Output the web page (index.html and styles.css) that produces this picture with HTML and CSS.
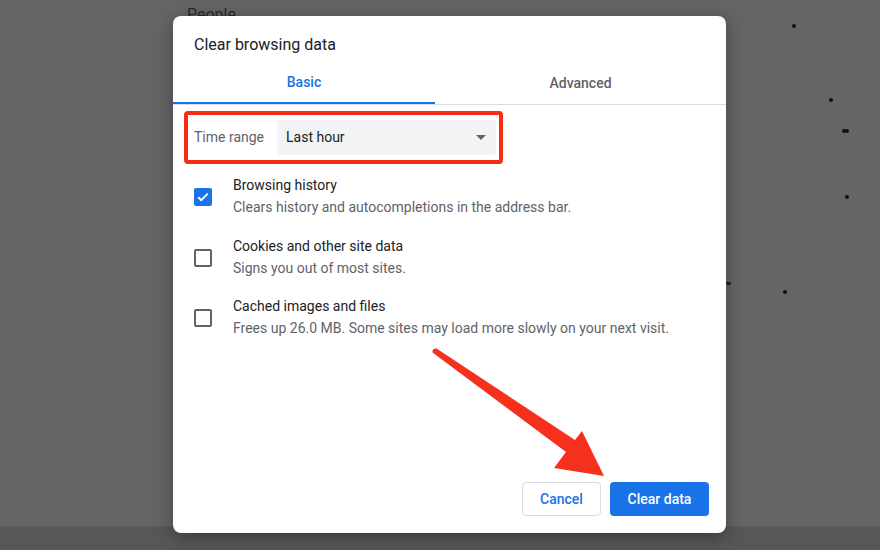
FILE: index.html
```html
<!DOCTYPE html>
<html>
<head>
<meta charset="utf-8">
<link rel="stylesheet" href="styles.css">
</head>
<body>
<div class="page">
  <div class="page-head">People</div>
  <div class="page-body"></div>
  <div class="page-foot"></div>
  <span class="dot" style="left:792px;top:24px"></span>
  <span class="dot" style="left:829px;top:98px"></span>
  <span class="dot" style="left:842px;top:129px"></span>
  <span class="dot" style="left:845px;top:129px"></span>
  <span class="dot" style="left:845px;top:195px"></span>
  <span class="dot" style="left:783px;top:290px"></span>
  <span class="dot tri" style="left:726px;top:282px"></span>
</div>

<div class="dialog">
  <div class="title">Clear browsing data</div>
  <div class="tabs">
    <div class="tab active">Basic</div>
    <div class="tab">Advanced</div>
  </div>
  <div class="content">
    <div class="range">
      <span class="range-label">Time range</span>
      <div class="select">
        <span>Last hour</span>
        <svg class="caret" width="10" height="5" viewBox="0 0 10 5"><path d="M0 0h10L5 5z" fill="#5f6368"/></svg>
      </div>
    </div>
    <div class="item">
      <span class="cb checked"><svg width="18" height="18" viewBox="0 0 18 18"><path d="M4.2 9.2l3 3 6.6-6.6" fill="none" stroke="#fff" stroke-width="2"/></svg></span>
      <div class="item-text">
        <div class="item-title">Browsing history</div>
        <div class="item-sub">Clears history and autocompletions in the address bar.</div>
      </div>
    </div>
    <div class="item">
      <span class="cb"></span>
      <div class="item-text">
        <div class="item-title">Cookies and other site data</div>
        <div class="item-sub">Signs you out of most sites.</div>
      </div>
    </div>
    <div class="item">
      <span class="cb"></span>
      <div class="item-text">
        <div class="item-title">Cached images and files</div>
        <div class="item-sub">Frees up 26.0 MB. Some sites may load more slowly on your next visit.</div>
      </div>
    </div>
  </div>
  <div class="actions">
    <button class="btn cancel">Cancel</button>
    <button class="btn primary">Clear data</button>
  </div>
</div>

<svg class="arrow" width="880" height="550" viewBox="0 0 880 550">
  <path d="M432.5 352.5 Q432 348 436.5 348.5 L575 440 L582 431 L604 476 L554 468 L566 452 Z" fill="#f5301c"/>
</svg>
</body>
</html>
```

FILE: styles.css
```css
* { box-sizing: border-box; }
html, body { margin: 0; padding: 0; }
body {
  width: 880px;
  height: 550px;
  overflow: hidden;
  background: #656565;
  font-family: Roboto, "Liberation Sans", Arial, sans-serif;
  position: relative;
}
.page {
  position: relative;
  width: 880px;
  height: 550px;
  display: flex;
  flex-direction: column;
}
.page-head {
  padding: 5px 0 0 187px;
  height: 24px;
  font-size: 16px;
  color: #2a2a2a;
}
.page-body {
  flex: 1;
  background: #656565;
}
.page-foot {
  height: 24px;
  border-top: 1px solid #5e5e5e;
  background: #575757;
}
.dot {
  position: absolute;
  width: 4px;
  height: 4px;
  border-radius: 50%;
  background: #111;
}
.dot.tri { width: 5px; height: 3px; border-radius: 0 0 3px 3px; background: #222; }

.dialog {
  position: absolute;
  left: 173px;
  top: 16px;
  width: 553px;
  height: 517px;
  background: #fff;
  border-radius: 8px;
  box-shadow: 0 4px 18px rgba(0,0,0,0.35);
  display: flex;
  flex-direction: column;
  color: #202124;
}
.title {
  padding: 17px 0 0 21px;
  font-size: 16px;
  line-height: 24px;
  color: #202124;
}
.tabs {
  margin-top: 6px;
  display: flex;
  border-bottom: 1px solid #dadce0;
}
.tab {
  height: 41px;
  display: flex;
  align-items: center;
  justify-content: center;
  font-size: 14px;
  font-weight: 500;
  color: #5f6368;
  flex: 291;
  padding-bottom: 2px;
}
.tab.active {
  flex: 262;
  color: #1a73e8;
  border-bottom: 2px solid #1a73e8;
  margin-bottom: -1px;
}
.content {
  flex: 1;
  display: flex;
  flex-direction: column;
}
.range {
  margin: 6px 0 0 11px;
  width: 319px;
  height: 53px;
  border: 4px solid #f42c18;
  border-radius: 4px;
  display: flex;
  align-items: center;
  padding: 0 3px 1px 6px;
}
.range-label {
  font-size: 14px;
  color: #5f6368;
  width: 83px;
  flex: none;
}
.select {
  flex: 1;
  height: 35px;
  background: #f1f3f4;
  border-radius: 4px;
  display: flex;
  align-items: center;
  justify-content: space-between;
  padding: 0 10px 0 9px;
  font-size: 14px;
  color: #202124;
}
.caret { display: block; }
.item {
  display: flex;
  align-items: center;
  margin-left: 21px;
  height: 40px;
}
.range + .item { margin-top: 12px; }
.item + .item { margin-top: 20.5px; }
.cb {
  width: 18px;
  height: 18px;
  border: 2px solid #5f6368;
  border-radius: 2px;
  flex: none;
  margin-right: 21px;
  margin-top: 2px;
}
.cb.checked {
  border: none;
  background: #1a73e8;
}
.cb svg { display: block; }
.item-title {
  font-size: 14px;
  line-height: 20px;
  color: #202124;
}
.item-sub {
  font-size: 14px;
  line-height: 20px;
  color: #5f6368;
  margin-top: 2px;
}
.actions {
  display: flex;
  justify-content: flex-end;
  gap: 9px;
  padding: 0 17px 17px 0;
}
.btn {
  height: 34px;
  border-radius: 4px;
  font-family: Roboto, "Liberation Sans", Arial, sans-serif;
  font-size: 14px;
  font-weight: 500;
  padding: 0;
  cursor: pointer;
}
.btn.cancel {
  width: 79px;
  background: #fff;
  border: 1px solid #dadce0;
  color: #1a73e8;
}
.btn.primary {
  width: 99px;
  background: #1a73e8;
  border: none;
  color: #fff;
}
.arrow {
  position: absolute;
  left: 0;
  top: 0;
  pointer-events: none;
}
```
